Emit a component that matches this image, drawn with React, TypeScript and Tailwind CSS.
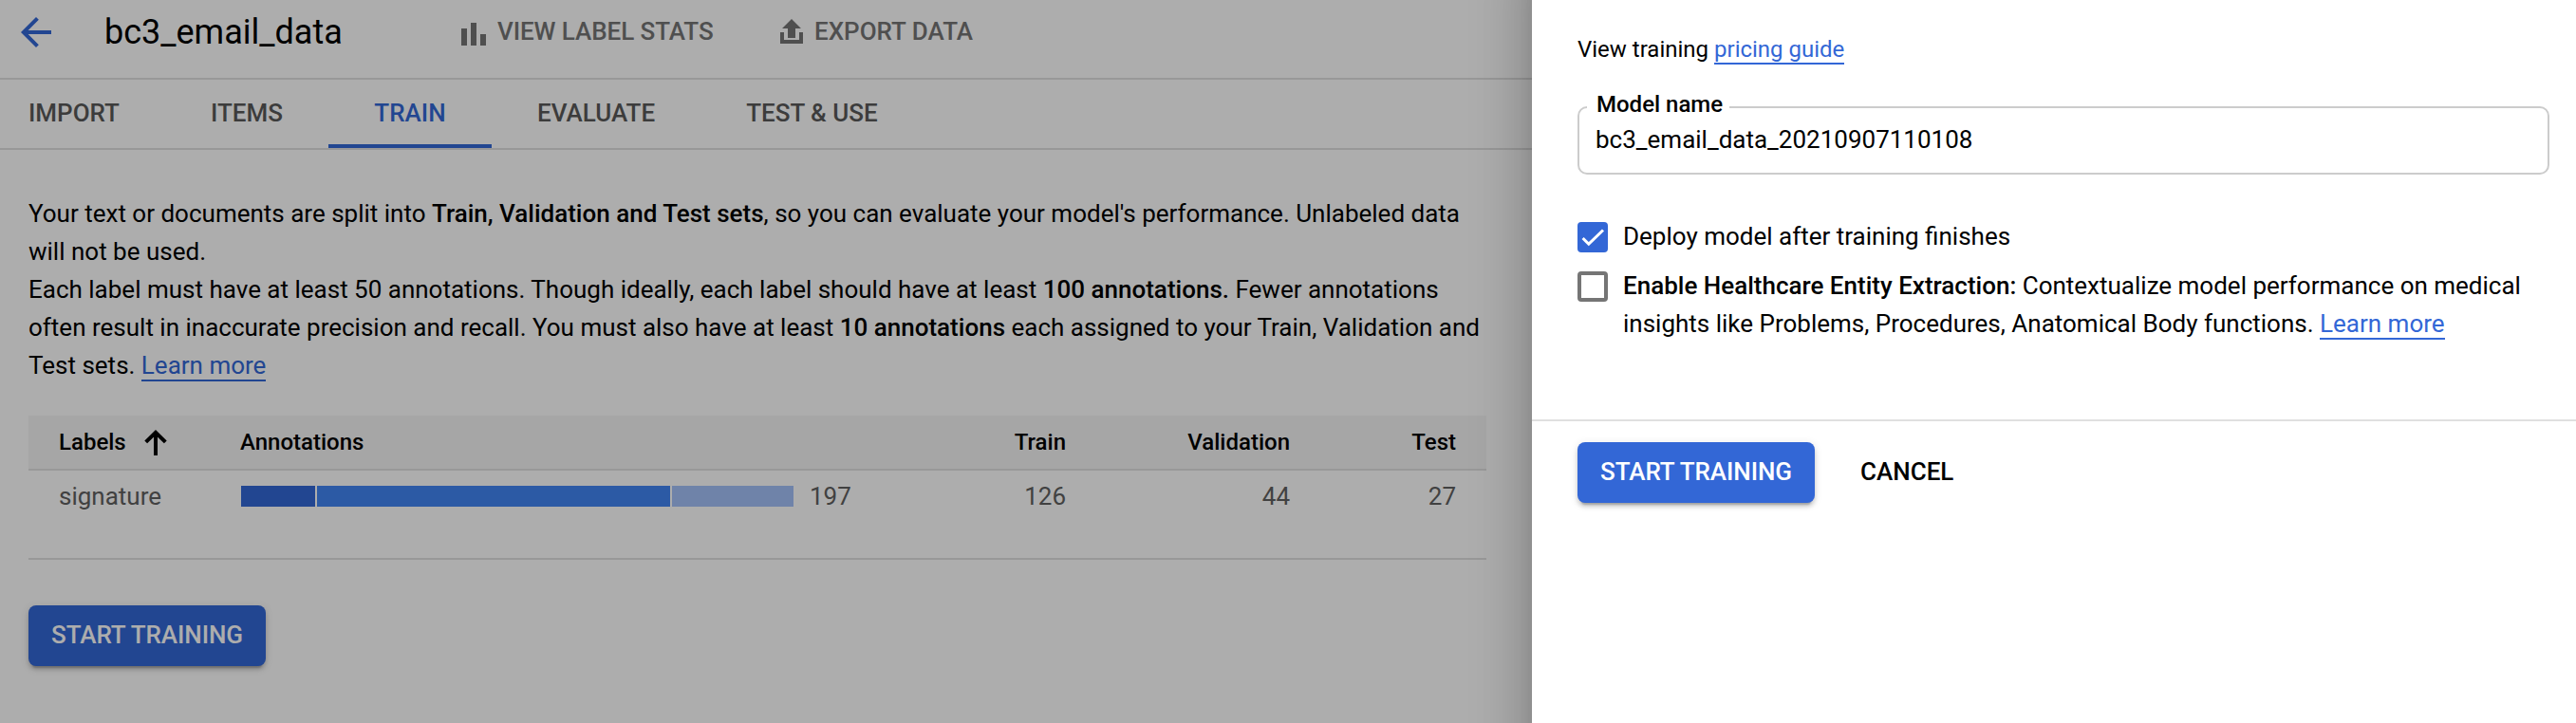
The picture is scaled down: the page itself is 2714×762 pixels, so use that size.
import type { ReactNode } from "react";

const BackIcon = () => (
  <svg className="size-12 text-[#3367d6]" viewBox="0 0 24 24" fill="currentColor">
    <path d="M20 11H7.83l5.59-5.59L12 4l-8 8 8 8 1.41-1.41L7.83 13H20v-2z" />
  </svg>
);

const StatsIcon = () => (
  <svg className="mt-1.5 h-6 w-[26px]" viewBox="0 0 26 24" fill="currentColor">
    <path d="M0 6h6v18H0zM10 0h6v24h-6zM20 12h6v12h-6z" />
  </svg>
);

const ExportIcon = () => (
  <svg className="h-[26px] w-6" viewBox="0 0 24 26" fill="currentColor">
    <path d="M12 0l10 10h-6v10H8V10H2z" />
    <path d="M0 14h4v8h16v-8h4v12H0z" />
  </svg>
);

const SortIcon = () => (
  <svg className="h-7 w-6" viewBox="0 0 24 28" fill="none" stroke="currentColor" strokeWidth="4">
    <path d="M12 28V5M1.700 13.900L12 3.800l10.300 10.100" />
  </svg>
);

const CheckIcon = () => (
  <svg className="size-8" viewBox="0 0 32 32" fill="none" stroke="white" strokeWidth="3">
    <path d="M5.600 17l6.200 6.200L27 8.500" />
  </svg>
);

const Link = ({ children }: { children: ReactNode }) => (
  <a className="border-b-2 border-[#3367d6] text-[#3367d6]">{children}</a>
);

const B = ({ children }: { children: ReactNode }) => <b className="font-medium">{children}</b>;

const PrimaryButton = ({ children }: { children: ReactNode }) => (
  <button className="flex h-16 w-[250px] items-center justify-center rounded-lg bg-[#3367d6] pb-0.5 font-medium tracking-[-0.08px] text-white shadow-[0_6px_2px_-4px_rgba(0,0,0,0.2),0_4px_4px_0_rgba(0,0,0,0.14),0_2px_10px_0_rgba(0,0,0,0.12)]">
    {children}
  </button>
);

const Tab = ({ label, active = false }: { label: string; active?: boolean }) => (
  <div
    className={
      active
        ? "flex h-[72px] w-[172px] items-center justify-center border-b-4 border-[#3367d6] pt-0.5 text-[#3367d6]"
        : "flex h-[72px] items-center border-b-4 border-transparent px-12 pt-0.5 text-[#595959]"
    }
  >
    {label}
  </div>
);

const segments = [
  { width: 78, color: "bg-[#3367d6]" },
  { width: 372, color: "bg-[#4285f4]" },
  { width: 128, color: "bg-[#a4c2f9]" },
];

function DatasetPage() {
  return (
    <main className="relative h-full w-[1614px] shrink-0 bg-white">
      <header className="flex h-[84px] items-center border-b-2 border-[#e0e0e0] pb-[14px] pl-[14px]">
        <BackIcon />
        <h1 className="ml-12 w-[251px] text-[36px] leading-10">bc3_email_data</h1>
        <div className="-mt-0.5 ml-[125px] flex items-center gap-3 font-medium text-[#757575]">
          <StatsIcon />
          <span className="w-[228px] whitespace-nowrap tracking-[-0.07px]">VIEW LABEL STATS</span>
        </div>
        <div className="-mt-0.5 ml-[70px] flex items-center gap-3 font-medium text-[#757575]">
          <ExportIcon />
          <span>EXPORT DATA</span>
        </div>
      </header>

      <nav className="-ml-[18px] flex border-b-2 border-[#e0e0e0] font-medium">
        <Tab label="IMPORT" />
        <Tab label="ITEMS" />
        <Tab label="TRAIN" active />
        <Tab label="EVALUATE" />
        <Tab label="TEST &amp; USE" />
      </nav>

      <div className="pl-[30px] pr-12">
        <p className="mt-[47px] whitespace-nowrap">
          Your text or documents are split into <B>Train, Validation and Test sets</B>, so you can evaluate your
          model's performance. Unlabeled data
          <br />
          will not be used.
          <br />
          Each label must have at least 50 annotations. Though ideally, each label should have at least{" "}
          <B>100 annotations.</B> Fewer annotations
          <br />
          often result in inaccurate precision and recall. You must also have at least <B>10 annotations</B> each
          assigned to your Train, Validation and
          <br />
          Test sets. <Link>Learn more</Link>
        </p>

        <section className="mt-[33px] border-b-2 border-[#e0e0e0] pb-[38px]">
          <div className="grid h-[58px] grid-cols-[191px_650px_220px_237px_174px] items-center border-b-2 border-[#e0e0e0] bg-[#f5f5f5] px-8 text-2xl font-medium">
            <div className="flex items-center gap-[19px]">
              Labels
              <SortIcon />
            </div>
            <div>Annotations</div>
            <div className="text-right">Train</div>
            <div className="pr-px text-right">Validation</div>
            <div className="text-right">Test</div>
          </div>
          <div className="grid h-[54px] grid-cols-[192px_649px_220px_237px_174px] items-center px-8 text-[#616161]">
            <div>signature</div>
            <div className="flex items-center gap-[17px]">
              <div className="flex h-[22px] gap-0.5">
                {segments.map((s) => (
                  <div key={s.color} className={s.color} style={{ width: s.width }} />
                ))}
              </div>
              197
            </div>
            <div className="text-right">126</div>
            <div className="pr-px text-right">44</div>
            <div className="text-right">27</div>
          </div>
        </section>

        <div className="mt-12">
          <PrimaryButton>START TRAINING</PrimaryButton>
        </div>
      </div>

      <div className="absolute inset-0 bg-black/32" />
    </main>
  );
}

function TrainingPanel() {
  return (
    <aside className="z-10 -mt-[60px] h-[922px] w-[1100px] shrink-0 bg-white pt-[60px] shadow-[0_16px_20px_-10px_rgba(0,0,0,0.2),0_32px_48px_4px_rgba(0,0,0,0.14),0_12px_60px_10px_rgba(0,0,0,0.12)]">
      <div className="h-[442px] pl-12 pr-7 pt-8">
        <p className="text-2xl leading-10">
          View training <Link>pricing guide</Link>
        </p>

        <div className="relative mt-10 flex h-[72px] items-center rounded-[10px] border-2 border-[#ccc] pb-[3px] pl-[17px]">
          <label className="absolute -top-[18px] left-2 w-[150px] bg-white pl-[10px] text-2xl leading-7 font-medium">
            Model name
          </label>
          bc3_email_data_20210907110108
        </div>

        <div className="mt-[45px] flex flex-col gap-3">
          <div className="flex gap-4">
            <span className="mt-[5px] size-8 shrink-0 rounded bg-[#3367d6]">
              <CheckIcon />
            </span>
            <span>Deploy model after training finishes</span>
          </div>
          <div className="flex gap-4">
            <span className="mt-[5px] size-8 shrink-0 rounded border-4 border-[#757575]" />
            <span className="whitespace-nowrap">
              <B>Enable Healthcare Entity Extraction:</B> Contextualize model performance on medical
              <br />
              insights like Problems, Procedures, Anatomical Body functions. <Link>Learn more</Link>
            </span>
          </div>
        </div>
      </div>

      <div className="flex items-center gap-12 border-t-2 border-[#e0e0e0] pl-12 pt-[22px]">
        <PrimaryButton>START TRAINING</PrimaryButton>
        <button className="pb-0.5 font-medium">CANCEL</button>
      </div>
    </aside>
  );
}

export default function App() {
  return (
    <div className="flex h-[762px] w-[2714px] items-start overflow-hidden bg-white font-['Roboto',sans-serif] text-[26px] leading-10 text-black">
      <DatasetPage />
      <TrainingPanel />
    </div>
  );
}
